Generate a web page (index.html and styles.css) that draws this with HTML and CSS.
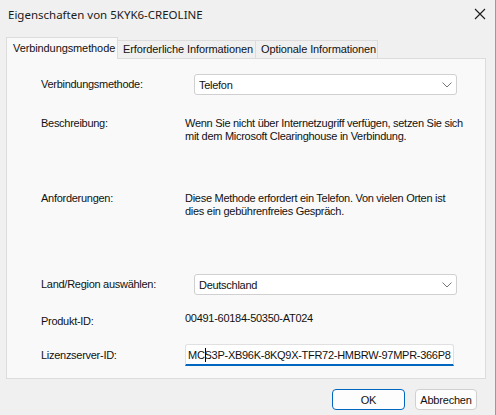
FILE: index.html
```html
<!DOCTYPE html>
<html lang="de">
<head>
<meta charset="utf-8">
<link rel="stylesheet" href="styles.css">
</head>
<body>
<div class="window">
  <div class="titlebar">
    <span class="title">Eigenschaften von 5KYK6-CREOLINE</span>
    <span class="close"><svg width="12" height="12" viewBox="0 0 12 12"><path d="M1 1L11 11M11 1L1 11" stroke="#1a1a1a" stroke-width="1.1" fill="none"/></svg></span>
  </div>
  <div class="tabs">
    <div class="tab active">Verbindungsmethode</div>
    <div class="tab">Erforderliche Informationen</div>
    <div class="tab">Optionale Informationen</div>
  </div>
  <div class="panel">
    <div class="row r1">
      <div class="label">Verbindungsmethode:</div>
      <div class="combo"><span>Telefon</span><svg class="chev" width="10" height="6" viewBox="0 0 10 6"><path d="M0.5 0.5L5 5L9.5 0.5" stroke="#777" stroke-width="1" fill="none"/></svg></div>
    </div>
    <div class="row r2">
      <div class="label">Beschreibung:</div>
      <div class="value">Wenn Sie nicht über Internetzugriff verfügen, setzen Sie sich<br>mit dem Microsoft Clearinghouse in Verbindung.</div>
    </div>
    <div class="row r3">
      <div class="label">Anforderungen:</div>
      <div class="value">Diese Methode erfordert ein Telefon. Von vielen Orten ist<br>dies ein gebührenfreies Gespräch.</div>
    </div>
    <div class="row r4">
      <div class="label">Land/Region auswählen:</div>
      <div class="combo"><span>Deutschland</span><svg class="chev" width="10" height="6" viewBox="0 0 10 6"><path d="M0.5 0.5L5 5L9.5 0.5" stroke="#777" stroke-width="1" fill="none"/></svg></div>
    </div>
    <div class="row r5">
      <div class="label lab5">Produkt-ID:</div>
      <div class="value">00491-60184-50350-AT024</div>
    </div>
    <div class="row r6">
      <div class="label">Lizenzserver-ID:</div>
      <div class="textbox"><span>MC</span><span class="caret"></span><span>S3P-XB96K-8KQ9X-TFR72-HMBRW-97MPR-366P8</span></div>
    </div>
  </div>
  <div class="footer">
    <div class="btn ok">OK</div>
    <div class="btn">Abbrechen</div>
  </div>
</div>
</body>
</html>
```
FILE: styles.css
```css
html, body {
  margin: 0;
  padding: 0;
  background: #f0f0f0;
}
.window {
  width: 496px;
  height: 415px;
  box-sizing: border-box;
  border-right: 1px solid #9a9a9a;
  font-family: "Liberation Sans", Arial, sans-serif;
  font-size: 11px;
  color: #111;
  overflow: hidden;
}
.titlebar {
  height: 28px;
  display: flex;
  align-items: center;
  justify-content: space-between;
  padding: 0 8px 0 8px;
}
.title {
  font-family: "Noto Sans", sans-serif;
  font-size: 11.5px;
  color: #1a1a1a;
}
.close {
  display: flex;
  width: 14px;
  height: 14px;
  align-items: center;
  justify-content: center;
}
.tabs {
  display: flex;
  align-items: flex-end;
  height: 30px;
  padding-left: 6px;
  box-sizing: border-box;
}
.tab {
  height: 18px;
  line-height: 17px;
  padding: 0 5px;
  border: 1px solid #dcdcdc;
  border-bottom: none;
  background: #f0f0f0;
  box-sizing: border-box;
  color: #111;
  white-space: nowrap;
  letter-spacing: -0.1px;
}
.tab + .tab {
  border-left: none;
}
.tab.active {
  height: 22px;
  line-height: 20px;
  background: #f9f9f9;
  padding: 0 6px;
  margin-bottom: -1px;
  z-index: 1;
}
.tab:nth-child(2) { width: 138px; }
.tab:nth-child(3) { width: 122px; }
.tab.active { width: 112px; }
.panel {
  margin-left: 6px;
  width: 480px;
  height: 321px;
  box-sizing: border-box;
  border: 1px solid #dcdcdc;
  background: #f9f9f9;
  padding-top: 15px;
  display: flex;
  flex-direction: column;
  letter-spacing: -0.28px;
}
.row {
  display: flex;
  align-items: flex-start;
  padding-left: 34px;
}
.label {
  width: 144px;
  flex: none;
  line-height: 13px;
}
.value {
  line-height: 13px;
}
.r1 { height: 21px; align-items: center; }
.r2 { margin-top: 22px; height: 75px; }
.r3 { height: 82px; }
.r4 { height: 21px; align-items: center; }
.r5 { margin-top: 17px; height: 32px; }
.lab5 { padding-top: 3px; }
.r6 { height: 22px; align-items: center; }
.combo {
  margin-left: 9px;
  width: 263px;
  height: 21px;
  box-sizing: border-box;
  border: 1px solid #d0d0d0;
  border-radius: 3px;
  background: #fff;
  display: flex;
  align-items: center;
  justify-content: space-between;
  padding: 0 4px 0 4px;
}
.chev { margin-top: 1px; }
.textbox {
  width: 269px;
  height: 22px;
  box-sizing: border-box;
  background: #fff;
  border: 1px solid #e0e0e0;
  border-bottom: 2px solid #0067c0;
  border-radius: 3px 3px 0 0;
  display: flex;
  align-items: center;
  padding-left: 2px;
  white-space: nowrap;
  overflow: hidden;
}
.caret {
  display: inline-block;
  width: 1px;
  height: 14px;
  background: #000;
  margin-right: -1px;
}
.footer {
  display: flex;
  justify-content: flex-end;
  gap: 10px;
  padding-right: 18px;
  padding-top: 10px;
}
.btn {
  width: 62px;
  height: 21px;
  box-sizing: border-box;
  border: 1px solid #d0d0d0;
  border-radius: 4px;
  background: #fdfdfd;
  display: flex;
  align-items: center;
  justify-content: center;
  font-size: 11px;
  letter-spacing: -0.2px;
}
.btn.ok {
  width: 73px;
  border: 1.5px solid #0067c0;
}
```
